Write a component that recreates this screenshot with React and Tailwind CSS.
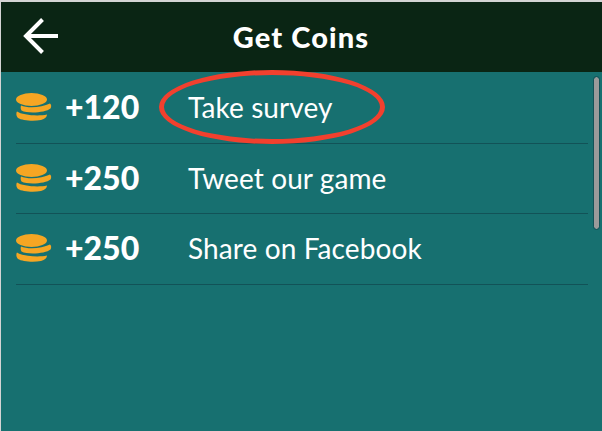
import React from "react";

const rows = [
  { coins: "+120", label: "Take survey" },
  { coins: "+250", label: "Tweet our game" },
  { coins: "+250", label: "Share on Facebook" },
];

const CoinStack = () => (
  <svg width="36" height="28" viewBox="0 0 36 28" className="shrink-0">
    <ellipse cx="15.5" cy="6.5" rx="15.5" ry="6.5" fill="#f5a623" />
    <path d="M5 12.5 C12 15.5 26 14.5 34 10.5 C35.5 11.5 35.5 14 34.5 15.5 C30 19.5 12 21 5.5 17.5 C4.5 16 4.5 14 5 12.5Z" fill="#f5a623" />
    <path d="M1 18.5 C6 22 22 23.5 31 21.5 C31 24 29 26 25 27 C17 28.5 6 27.5 2 25 C0 23 0 20 1 18.5Z" fill="#f5a623" />
  </svg>
);

const BackArrow = () => (
  <svg width="40" height="40" viewBox="0 0 40 40" fill="none" stroke="white" strokeWidth="4" className="absolute left-[21px] top-[14px]">
    <path d="M4 20 H36" />
    <path d="M20.5 3.5 L4 20 L20.5 36.5" />
  </svg>
);

export default function App() {
  return (
    <div className="relative w-[602px] h-[431px] overflow-hidden bg-[#d4d4d4] pt-[2px] pl-[1px] font-['Lato',sans-serif] text-white">
      <header className="relative flex h-[70px] items-center justify-center bg-[#0a2514] pr-[1px]">
        <BackArrow />
        <h1 className="text-[29px] font-black tracking-[1.1px]">Get Coins</h1>
      </header>

      <main className="h-[359px] bg-[#177070] pl-[15px] pr-[14px] pt-[1px]">
        {rows.map((row) => (
          <div key={row.label} className="flex h-[70.5px] items-center border-b border-[#125257] pb-[1px]">
            <CoinStack />
            <span className="ml-[13px] w-[123px] text-[32px] font-black">{row.coins}</span>
            <span className="text-[28px] tracking-[0.1px]">{row.label}</span>
          </div>
        ))}
      </main>

      <div className="absolute left-[159px] top-[70px] h-[74px] w-[226px] rounded-[50%] border-[5px] border-[#f2402e]" />
      <div className="absolute left-[594px] top-[77px] h-[152px] w-[5px] rounded-full bg-[#9a9a9a] outline outline-[1px] outline-[#125257]" />
    </div>
  );
}
